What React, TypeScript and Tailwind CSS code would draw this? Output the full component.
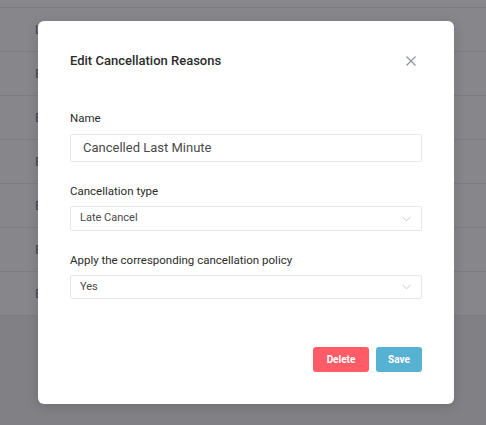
import React from "react";

const rows = ["L", "E", "E", "E", "E", "E", "E"];

function Chevron() {
  return (
    <svg width="9" height="6" viewBox="0 0 9 6" fill="none">
      <path d="M0.5 0.8 L4.5 4.8 L8.5 0.8" stroke="#c8c8cc" strokeWidth="1" />
    </svg>
  );
}

export default function App() {
  return (
    <div
      className="relative w-[486px] h-[425px] overflow-hidden bg-[#818085]"
      style={{ fontFamily: "Roboto, 'Noto Sans', sans-serif" }}
    >
      {/* background page (dimmed) */}
      <div className="flex flex-col">
        <div className="h-[8px] border-b border-[#7c7b80] bg-[#87868b]" />
        {rows.map((r, i) => (
          <div
            key={i}
            className="h-[44px] flex items-center pl-[35px] border-b border-[#7c7b80] bg-[#87868b] text-[13px] text-[#3f4256]"
          >
            {r}
          </div>
        ))}
      </div>

      {/* modal */}
      <div className="absolute left-[38px] top-[21px] w-[416px] h-[383px] bg-white rounded-[6px] shadow-[0_2px_12px_rgba(0,0,0,0.15)] px-[32px] pt-[31px]">
        <div className="flex items-center justify-between h-[18px]">
          <div className="text-[13px] font-medium text-[#2b2b2b]">
            Edit Cancellation Reasons
          </div>
          <svg width="10" height="10" viewBox="0 0 10 10" className="mr-[6px]">
            <path d="M0.5 0.5 L9.5 9.5 M9.5 0.5 L0.5 9.5" stroke="#8e92a0" strokeWidth="1.2" />
          </svg>
        </div>

        <div className="mt-[41px] text-[11.5px] text-[#2b2b2b] leading-[14px]">Name</div>
        <div className="mt-[9px] h-[28px] border border-[#e8e8ea] rounded-[2px] flex items-center pl-[12px] text-[13px] text-[#4a4a4a]">
          Cancelled Last Minute
        </div>

        <div className="mt-[22px] text-[11.5px] text-[#2b2b2b] leading-[14px]">Cancellation type</div>
        <div className="mt-[8px] h-[25px] border border-[#e8e8ea] rounded-[2px] flex items-center justify-between pl-[9px] pr-[10px] text-[11px] text-[#4a4a4a]">
          <span>Late Cancel</span>
          <Chevron />
        </div>

        <div className="mt-[22px] text-[11.5px] text-[#2b2b2b] leading-[14px]">
          Apply the corresponding cancellation policy
        </div>
        <div className="mt-[8px] h-[24px] border border-[#e8e8ea] rounded-[2px] flex items-center justify-between pl-[9px] pr-[10px] text-[11px] text-[#4a4a4a]">
          <span>Yes</span>
          <Chevron />
        </div>

        <div className="mt-[48px] flex justify-end gap-[7px]">
          <button className="w-[56px] h-[25px] rounded-[3px] bg-[#ff5c67] text-white text-[10px] font-bold">
            Delete
          </button>
          <button className="w-[46px] h-[25px] rounded-[3px] bg-[#56b1d3] text-white text-[10px] font-bold">
            Save
          </button>
        </div>
      </div>
    </div>
  );
}
